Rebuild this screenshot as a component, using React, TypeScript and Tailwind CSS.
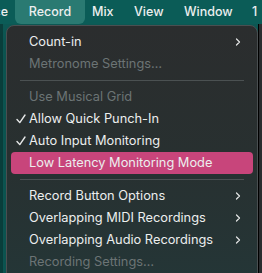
import { ChevronRight } from 'lucide-react'

type Item =
  | { kind: 'sep' }
  | { kind: 'item'; label: string; disabled?: boolean; checked?: boolean; sub?: boolean; active?: boolean }

const ITEMS: Item[] = [
  { kind: 'item', label: 'Count-in', sub: true },
  { kind: 'item', label: 'Metronome Settings…', disabled: true },
  { kind: 'sep' },
  { kind: 'item', label: 'Use Musical Grid', disabled: true },
  { kind: 'item', label: 'Allow Quick Punch-In', checked: true },
  { kind: 'item', label: 'Auto Input Monitoring', checked: true },
  { kind: 'item', label: 'Low Latency Monitoring Mode', active: true },
  { kind: 'sep' },
  { kind: 'item', label: 'Record Button Options', sub: true },
  { kind: 'item', label: 'Overlapping MIDI Recordings', sub: true },
  { kind: 'item', label: 'Overlapping Audio Recordings', sub: true },
  { kind: 'item', label: 'Recording Settings…', disabled: true },
]

function Check() {
  return (
    <svg width="10" height="10" viewBox="0 0 10 10" className="shrink-0">
      <path d="M1 5.5 L3.8 8.6 L9 1" fill="none" stroke="#e6e8e8" strokeWidth="1.4" strokeLinecap="round" strokeLinejoin="round" />
    </svg>
  )
}

export default function App() {
  return (
    <div
      className="relative w-[262px] h-[273px] overflow-hidden bg-[#0d5753] text-[#ecefef]"
      style={{ fontFamily: 'Inter, "Noto Sans", sans-serif' }}
    >
      {/* Menu bar */}
      <div className="flex items-center h-[24px] text-[12.5px] font-medium bg-[#0b5c57] whitespace-nowrap">
        <span className="w-[15px] shrink-0 flex justify-end pr-[7px]">ce</span>
        <span className="flex items-center justify-center w-[70px] shrink-0 h-[24px] rounded-b-[6px] bg-[#2a7a72]">Record</span>
        <span className="ml-[7px] w-[42px] shrink-0">Mix</span>
        <span className="w-[50px] shrink-0">View</span>
        <span className="w-[68px] shrink-0">Window</span>
        <span>1</span>
      </div>

      {/* Background content on the right */}
      <div className="absolute right-0 top-[24px] w-[4px] h-[249px] bg-[#2b2e30] border-l border-black" />
      <div className="absolute left-0 top-[24px] w-[3px] h-[249px] bg-[#0a3f3c]" />

      {/* Dropdown */}
      <div className="absolute left-[6px] top-[25px] w-[252px] h-[260px] rounded-[8px] border border-[#4a4f51] bg-gradient-to-b from-[#2b2d2e] via-[#283030] to-[#243637] pt-[5px] px-[4px] text-[12.8px] shadow-lg">
        {ITEMS.map((it, i) =>
          it.kind === 'sep' ? (
            <div key={i} className="h-[11px] flex items-center px-[9px]">
              <div className="w-full h-px bg-[#4b5152]" />
            </div>
          ) : (
            <div
              key={i}
              className={`flex items-center h-[22px] rounded-[4px] pl-[5px] pr-[9px] ${
                it.active ? 'bg-[#c8457b]' : ''
              } ${it.disabled ? 'text-[#6c7475]' : 'text-[#eceeee]'}`}
            >
              <div className="w-[13px] flex items-center">{it.checked && <Check />}</div>
              <span className="flex-1 whitespace-nowrap">{it.label}</span>
              {it.sub && <ChevronRight size={12} strokeWidth={2.4} className="text-[#e4e6e6]" />}
            </div>
          )
        )}
      </div>
    </div>
  )
}
